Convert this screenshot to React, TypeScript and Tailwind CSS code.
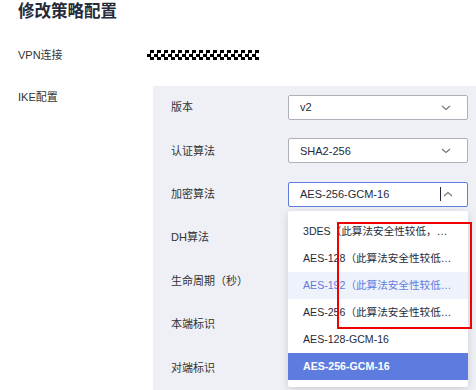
import React from 'react'

function Chevron({ up = false }: { up?: boolean }) {
  return (
    <svg width="10" height="6" viewBox="0 0 10 6" className="shrink-0">
      <path
        d={up ? 'M1 5L5 1.5L9 5' : 'M1 1L5 4.5L9 1'}
        fill="none"
        stroke="#71757f"
        strokeWidth="1.1"
      />
    </svg>
  )
}

function Select({ value, focused = false }: { value: string; focused?: boolean }) {
  return (
    <div
      className={
        focused
          ? 'flex-1 h-[25px] bg-white border border-[#5e7ce0] rounded-[2px] flex items-center justify-between pl-[11px] pr-[14px] text-[#252b3a]'
          : 'flex-1 h-[25px] bg-white border border-[#adb0b8] rounded-[2px] flex items-center justify-between pl-[11px] pr-[16px] text-[#252b3a]'
      }>
      <span>{value}</span>
      {focused ? (
        <span className="flex items-center gap-[2px]">
          <span className="w-px h-[14px] bg-[#252b3a]" />
          <Chevron up />
        </span>
      ) : (
        <Chevron />
      )}
    </div>
  )
}

const options = [
  { text: '3DES（此算法安全性较低，建议使用其他算法）' },
  { text: 'AES-128（此算法安全性较低，建议使用其他算法）' },
  { text: 'AES-192（此算法安全性较低，建议使用其他算法）', hover: true },
  { text: 'AES-256（此算法安全性较低，建议使用其他算法）' },
  { text: 'AES-128-GCM-16' },
  { text: 'AES-256-GCM-16', selected: true },
]

const rows = [
  { label: '版本', value: 'v2' },
  { label: '认证算法', value: 'SHA2-256' },
  { label: '加密算法', value: 'AES-256-GCM-16', focused: true },
  { label: 'DH算法', value: 'group14' },
  { label: '生命周期（秒）', value: '86400' },
  { label: '本端标识', value: 'IP Address' },
  { label: '对端标识', value: 'IP Address' },
]

export default function App() {
  return (
    <div className="w-[476px] h-[390px] overflow-hidden bg-white pl-[18px] text-[11px] text-[#333] font-['Liberation_Sans','Noto_Sans_CJK_SC',sans-serif]">
      <h1 className="h-[22px] leading-[22px] text-[16.5px] font-bold text-[#252b3a]">修改策略配置</h1>

      <div className="mt-[22px] h-[22px] flex items-center">
        <div className="w-[129px]">VPN连接</div>
        <div className="w-[112px] h-[10px] bg-[image:repeating-conic-gradient(#000_0_25%,#fff_0_50%)] bg-[length:7px_7px]" />
      </div>

      <div className="mt-[20px] flex">
        <div className="w-[135px] h-[22px] leading-[22px] shrink-0">IKE配置</div>
        <div className="flex-1 bg-[#eef0f5] pl-[18px] pr-[8px] pt-[9px] pb-[30px] flex flex-col gap-[18.4px]">
          {rows.map((r) => (
            <div key={r.label} className="relative h-[25px] flex items-center">
              <div className="w-[117px] shrink-0">{r.label}</div>
              <Select value={r.value} focused={r.focused} />
              {r.focused && (
                <div className="absolute z-10 top-[29px] left-[117px] right-0 bg-white rounded-[2px] shadow-[0_2px_8px_rgba(0,0,0,0.15)] pt-[7px] pb-[7px] text-[10.6px]">
                  {options.map((o) => (
                    <div
                      key={o.text}
                      className={
                        o.selected
                          ? 'h-[27px] leading-[27px] pl-[15px] pr-[12px] truncate bg-[#5e7ce0] text-white font-bold'
                          : o.hover
                            ? 'h-[27px] leading-[27px] pl-[15px] pr-[12px] truncate bg-[#eef2fb] text-[#5e7ce0]'
                            : 'h-[27px] leading-[27px] pl-[15px] pr-[12px] truncate text-[#252b3a]'
                      }>
                      {o.text}
                    </div>
                  ))}
                  <div className="absolute left-[49px] top-[11px] w-[135px] h-[107px] border-2 border-[#f00000]" />
                </div>
              )}
            </div>
          ))}
        </div>
      </div>
    </div>
  )
}
